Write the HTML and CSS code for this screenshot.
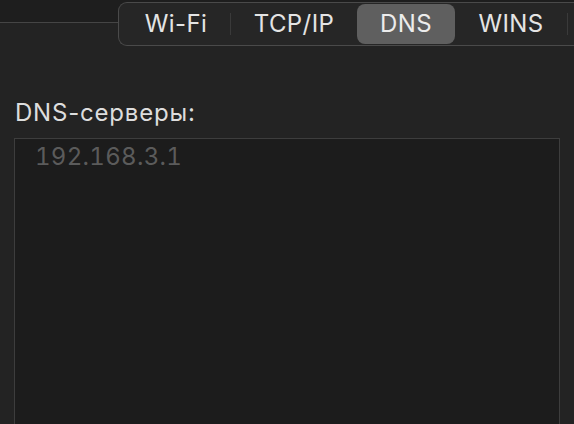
FILE: index.html
```html
<!DOCTYPE html>
<html lang="ru">
<head>
<meta charset="utf-8">
<title>DNS</title>
<link rel="stylesheet" href="styles.css">
</head>
<body>
<div class="header"></div>
<div class="panel">
  <div class="tabs">
    <div class="seg seg-wifi">Wi-Fi</div>
    <div class="sep"></div>
    <div class="seg seg-tcp">TCP/IP</div>
    <div class="seg seg-dns active">DNS</div>
    <div class="seg seg-wins">WINS</div>
    <div class="sep"></div>
  </div>
  <div class="label">DNS-серверы:</div>
  <div class="listbox">
    <div class="entry">192.168.3.1</div>
  </div>
</div>
</body>
</html>
```
FILE: styles.css
```css
html, body {
  margin: 0;
  padding: 0;
}
body {
  width: 574px;
  height: 424px;
  overflow: hidden;
  background: #1e1e1e;
  font-family: "Inter", "Liberation Sans", sans-serif;
  font-size: 24px;
  line-height: 28px;
}
.header {
  height: 22px;
}
.panel {
  border-top: 1px solid #454545;
  background: #232323;
  height: 401px;
}
.tabs {
  margin-top: -21px;
  margin-left: 118px;
  height: 42px;
  border: 1px solid #4a4a4a;
  border-right: none;
  border-radius: 9px 0 0 9px;
  background: #262626;
  display: flex;
  align-items: center;
  padding-left: 3px;
  box-sizing: content-box;
}
.seg {
  color: #e4e4e4;
  text-align: center;
  line-height: 28px;
  letter-spacing: 0.4px;
}
.seg-wifi { width: 108px; }
.seg-tcp { width: 126px; }
.seg-dns {
  width: 98px;
  height: 40px;
  line-height: 40px;
  border-radius: 8px;
  background: #5f5f5f;
  color: #ececec;
}
.seg-wins { width: 112px; }
.sep {
  width: 1px;
  height: 22px;
  background: #3a3a3a;
}
.label {
  margin-top: 53px;
  margin-left: 15px;
  color: #dddddd;
  letter-spacing: 0.8px;
}
.listbox {
  margin-top: 11px;
  margin-left: 14px;
  width: 546px;
  height: 300px;
  border: 1px solid #3d3d3d;
  background: #1c1c1c;
  padding: 4px 0 0 20px;
  box-sizing: border-box;
}
.entry {
  color: #5b5b5b;
  font-variant-numeric: tabular-nums;
  letter-spacing: 0.3px;
}
```
